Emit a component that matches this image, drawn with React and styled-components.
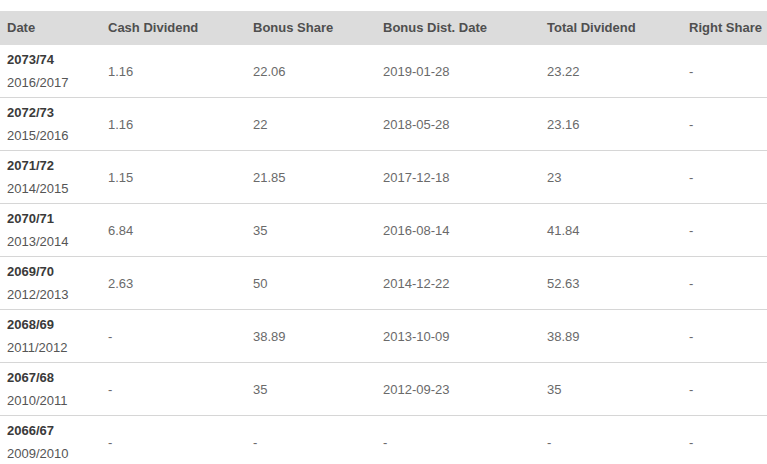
import React from "react";
import styled, { createGlobalStyle } from "styled-components";

const Global = createGlobalStyle`
  html, body { margin: 0; padding: 0; background: #fff; }
  body { font-family: "Liberation Sans", Arial, sans-serif; }
`;

const Wrap = styled.div`
  padding-top: 11px;
  width: 767px;
  overflow: hidden;
`;

const Table = styled.table`
  width: 767px;
  border-collapse: collapse;
  table-layout: fixed;
  font-size: 13px;
`;

const Th = styled.th`
  background: #dcdcdc;
  color: #4f4f4f;
  font-weight: bold;
  text-align: left;
  padding: 8px 7px;
  line-height: 18px;
  white-space: nowrap;
`;

const Tr = styled.tr`
  border-bottom: 1px solid #d6d6d6;
  &:last-child { border-bottom: none; }
`;

const Td = styled.td`
  color: #6a6a6a;
  padding: 3px 7px;
  line-height: 23px;
  vertical-align: middle;
  white-space: nowrap;
`;

const Year = styled.div`
  font-weight: bold;
  color: #3a3a3a;
`;

const AdYear = styled.div`
  color: #555;
`;

const widths = [101, 145, 130, 164, 142, 85];
const headers = ["Date", "Cash Dividend", "Bonus Share", "Bonus Dist. Date", "Total Dividend", "Right Share"];

const rows = [
  ["2073/74", "2016/2017", "1.16", "22.06", "2019-01-28", "23.22", "-"],
  ["2072/73", "2015/2016", "1.16", "22", "2018-05-28", "23.16", "-"],
  ["2071/72", "2014/2015", "1.15", "21.85", "2017-12-18", "23", "-"],
  ["2070/71", "2013/2014", "6.84", "35", "2016-08-14", "41.84", "-"],
  ["2069/70", "2012/2013", "2.63", "50", "2014-12-22", "52.63", "-"],
  ["2068/69", "2011/2012", "-", "38.89", "2013-10-09", "38.89", "-"],
  ["2067/68", "2010/2011", "-", "35", "2012-09-23", "35", "-"],
  ["2066/67", "2009/2010", "-", "-", "-", "-", "-"],
];

export default function App() {
  return (
    <Wrap>
      <Global />
      <Table>
        <colgroup>
          {widths.map((w, i) => (
            <col key={i} style={{ width: w }} />
          ))}
        </colgroup>
        <thead>
          <tr>
            {headers.map((h) => (
              <Th key={h}>{h}</Th>
            ))}
          </tr>
        </thead>
        <tbody>
          {rows.map((r) => (
            <Tr key={r[0]}>
              <Td>
                <Year>{r[0]}</Year>
                <AdYear>{r[1]}</AdYear>
              </Td>
              {r.slice(2).map((v, i) => (
                <Td key={i}>{v}</Td>
              ))}
            </Tr>
          ))}
        </tbody>
      </Table>
    </Wrap>
  );
}
